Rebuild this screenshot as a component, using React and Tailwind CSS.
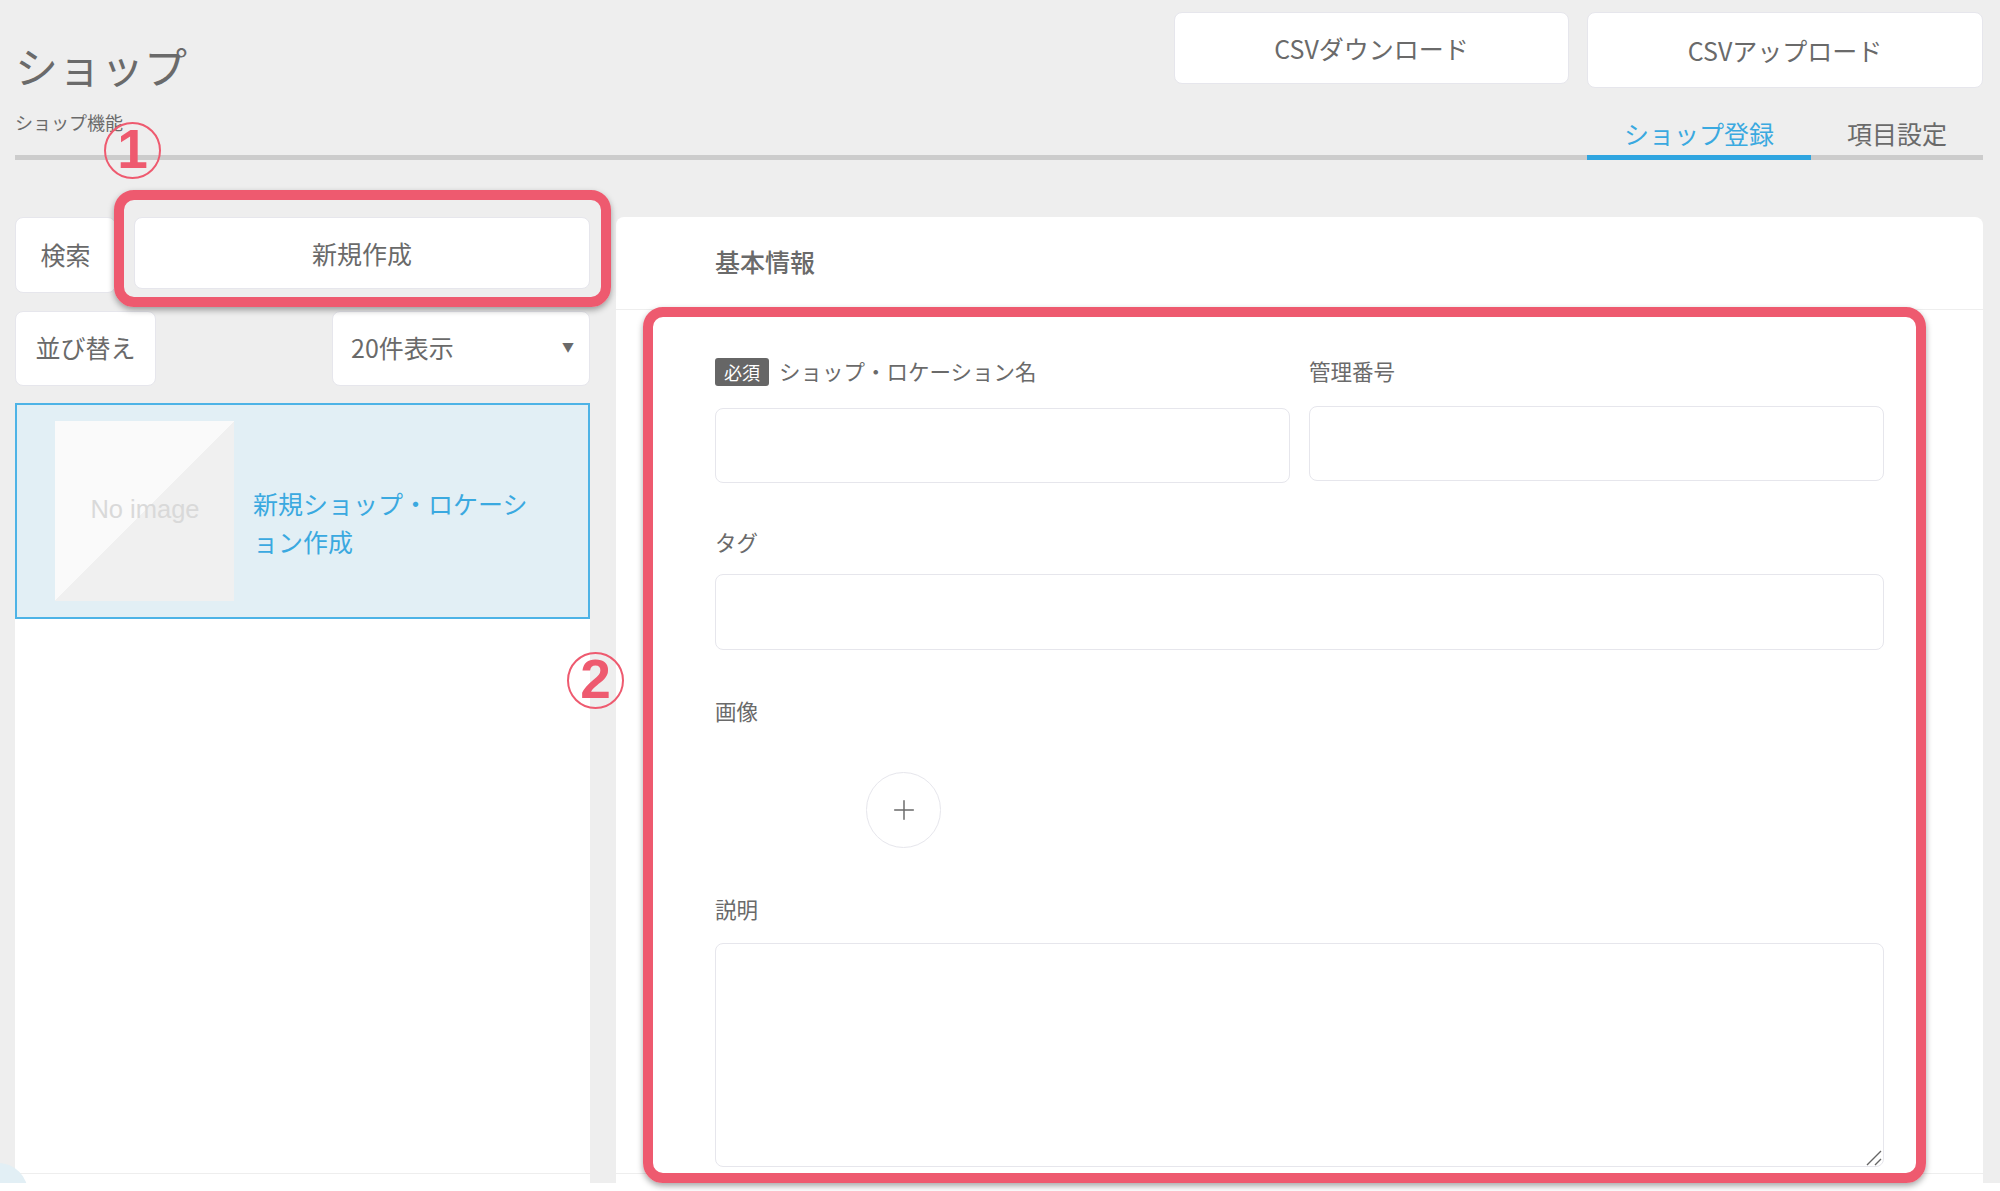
import { Plus } from 'lucide-react';

const btn = "flex items-center justify-center bg-white border border-[#e6e6ec] rounded-[8px] text-[25px] leading-none";
const input = "block w-full bg-white border border-[#e6e6ec] rounded-[8px] outline-none";
const label = "flex items-center h-[28px] pb-[2px] text-[21.5px] leading-none";

function Marker({ className, children }) {
  return (
    <div className={`absolute w-[57px] h-[57px] pb-[3px] flex items-center justify-center rounded-full border-2 border-[#ee5a6f] text-[#ee5a6f] font-['Liberation_Sans',sans-serif] font-bold text-[55px] leading-none ${className}`}>
      {children}
    </div>
  );
}

export default function App() {
  return (
    <div className="relative h-[1191px] overflow-hidden bg-white text-[#6a6a6a] font-['Noto_Sans_CJK_JP',sans-serif]">
      <div className="relative h-[1183px] overflow-hidden bg-[#eee] pl-[15px] pr-[17px] flex flex-col">
        {/* header */}
        <div className="h-[160px] shrink-0 flex justify-between border-b-[5px] border-[#ccc]">
          <div>
            <h1 className="mt-[41px] text-[43px] leading-[48px] font-normal">ショップ</h1>
            <p className="mt-[23px] text-[18px] leading-[20px]">ショップ機能</p>
          </div>
          <div className="flex flex-col justify-between pt-[12px]">
            <div className="flex items-start justify-end gap-[18px]">
              <button className={`${btn} w-[395px] h-[72px]`}>CSVダウンロード</button>
              <button className={`${btn} w-[396px] h-[76px]`}>CSVアップロード</button>
            </div>
            <div className="flex justify-end -mb-[5px]">
              <div className="w-[224px] h-[50px] pt-[3px] flex items-center justify-center border-b-[5px] border-[#2fa5e0] text-[#3aa9e0] text-[25px]">ショップ登録</div>
              <div className="w-[172px] h-[50px] pt-[3px] flex items-center justify-center border-b-[5px] border-transparent text-[25px]">項目設定</div>
            </div>
          </div>
        </div>

        {/* body */}
        <div className="flex flex-1 min-h-0 gap-[26px] pt-[57px]">
          <div className="w-[575px] shrink-0 flex flex-col">
            <div className="flex items-start">
              <button className={`${btn} w-[101px] h-[76px] pb-[2px]`}>検索</button>
              <button className={`${btn} ml-[18px] w-[456px] h-[72px]`}>新規作成</button>
            </div>
            <div className="flex justify-between mt-[18px]">
              <button className={`${btn} w-[141px] h-[75px] pb-[2px]`}>並び替え</button>
              <div className={`${btn} w-[258px] h-[75px] pb-[2px] !justify-between pl-[18px] pr-[15px]`}>
                <span>20件表示</span>
                <span className="text-[12px] leading-none -mt-[2px]">▼</span>
              </div>
            </div>
            <div className="flex-1 mt-[17px] bg-white flex flex-col">
              <div className="h-[216px] shrink-0 flex items-center border-2 border-[#4db3e6] bg-[#e2eff5] pl-[38px]">
                <div className="w-[179px] h-[180px] pb-[3px] pl-px flex items-center justify-center bg-[linear-gradient(135deg,#fafafa_50%,#f0f0f0_50%)] text-[#d9d9d9] text-[25.5px] font-['Liberation_Sans',sans-serif]">
                  No image
                </div>
                <div className="ml-[19px] mt-[21px] text-[#3aa9e0] text-[25px] leading-[38px]">
                  新規ショップ・ロケーシ<br />ョン作成
                </div>
              </div>
              <div className="flex-1" />
              <div className="h-[10px] border-t border-[#eee]" />
            </div>
          </div>

          <div className="flex-1 bg-white rounded-t-[8px] flex flex-col">
            <div className="h-[93px] shrink-0 flex items-center pl-[99px] pb-[2px] border-b border-[#eee] text-[25px] font-medium">基本情報</div>
            <form className="flex-1 pl-[99px] pr-[99px] pt-[48px]">
              <div className="grid grid-cols-2 gap-x-[19px]">
                <div>
                  <div className={label}>
                    <span className="w-[54px] h-[28px] -mb-[2px] mr-[10px] flex items-center justify-center rounded-[3px] bg-[#666] text-white text-[18px]">必須</span>
                    ショップ・ロケーション名
                  </div>
                  <input className={`${input} mt-[22px] h-[75px]`} />
                </div>
                <div>
                  <div className={label}>管理番号</div>
                  <input className={`${input} mt-[20px] h-[75px]`} />
                </div>
              </div>
              <div className={`${label} mt-[46px]`}>タグ</div>
              <input className={`${input} mt-[17px] h-[76px]`} />
              <div className={`${label} mt-[48px]`}>画像</div>
              <button type="button" className="mt-[46px] ml-[151px] w-[75px] h-[76px] flex items-center justify-center rounded-full border border-[#e6e6ec]">
                <Plus size={32} strokeWidth={1.1} />
              </button>
              <div className={`${label} mt-[48px]`}>説明</div>
              <div className="relative mt-[19px]">
                <textarea className={`${input} h-[224px] resize-none`} />
                <svg className="absolute right-0 bottom-0" width="18" height="18" viewBox="0 0 18 18" stroke="#666" strokeWidth="1.4" fill="none">
                  <path d="M1 16 L15 2 M9 16 L15 10" />
                </svg>
              </div>
            </form>
            <div className="h-[10px] shrink-0 border-t border-[#eee]" />
          </div>
        </div>

        <div className="absolute -left-[32px] top-[1163px] w-[60px] h-[60px] rounded-full bg-[#e2eff5]" />
      </div>

      {/* annotations */}
      <div className="absolute left-[114px] top-[190px] w-[497px] h-[117px] rounded-[20px] border-[10px] border-[#ee5a6f] shadow-[0_3px_6px_rgba(0,0,0,0.35)]" />
      <div className="absolute left-[643px] top-[307px] w-[1283px] h-[876px] rounded-[20px] border-[10px] border-[#ee5a6f] shadow-[0_3px_6px_rgba(0,0,0,0.35)]" />
      <Marker className="left-[104px] top-[122px]">1</Marker>
      <Marker className="left-[567px] top-[652px]">2</Marker>
    </div>
  );
}
